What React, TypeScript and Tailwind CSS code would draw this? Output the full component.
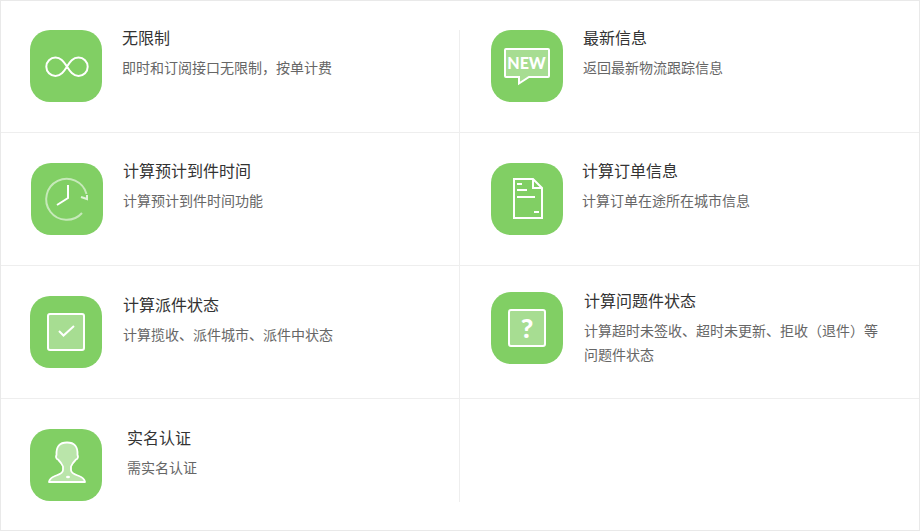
import type { ReactNode } from 'react';

const IconInfinite = () => (
  <svg width="72" height="72" viewBox="0 0 72 72" fill="none" stroke="#fff" strokeWidth="2">
    <path d="M37 36.500c-3-4.200-5.800-9-11.500-9a9.200 9.200 0 0 0 0 18.400c5.700 0 8.500-4.600 11.500-9.400s5.800-9 11.500-9a9.200 9.200 0 0 1 0 18.400c-5.700 0-8.500-4.600-11.500-9.400z" />
  </svg>
);

const IconNew = () => (
  <svg width="72" height="72" viewBox="0 0 72 72" fill="none">
    <path
      d="M15 19h42a1 1 0 0 1 1 1v26a1 1 0 0 1-1 1H38l-10 6.500V47H15a1 1 0 0 1-1-1V20a1 1 0 0 1 1-1z"
      fill="#fff"
      fillOpacity=".3"
      stroke="#fff"
      strokeWidth="2"
    />
    <text x="35.500" y="39" textAnchor="middle" fill="#fff" fontSize="16" fontWeight="900" fontFamily="Lato, sans-serif">
      NEW
    </text>
  </svg>
);

const IconClock = () => (
  <svg width="72" height="72" viewBox="0 0 72 72" fill="none" stroke="#fff" strokeWidth="2">
    <path d="M51 50A20.500 20.500 0 1 1 55.500 31" strokeOpacity=".55" />
    <path d="M50 34l6 2v-4" strokeOpacity=".75" />
    <path d="M37 22v13l-11 7" />
  </svg>
);

const IconDoc = () => (
  <svg width="72" height="72" viewBox="0 0 72 72" fill="none" stroke="#fff" strokeWidth="2">
    <path d="M23 16h19l9 9v30H23z" />
    <path d="M42 16v9h9M26 21h5M26 27h10M26 34h18M43 49h5" />
  </svg>
);

const IconCheck = () => (
  <svg width="72" height="72" viewBox="0 0 72 72" fill="none">
    <rect x="18" y="18" width="36" height="36" rx="2" fill="#fff" fillOpacity=".3" stroke="#fff" strokeWidth="2" />
    <path d="M29 35l4.500 4.500L44 30" stroke="#fff" strokeWidth="2" />
  </svg>
);

const IconQuestion = () => (
  <svg width="72" height="72" viewBox="0 0 72 72" fill="none">
    <rect x="18" y="18" width="36" height="36" rx="2" fill="#fff" fillOpacity=".3" stroke="#fff" strokeWidth="2" />
    <text x="36" y="46" textAnchor="middle" fill="#fff" fontSize="27" fontWeight="900" fontFamily="Lato, sans-serif">
      ?
    </text>
  </svg>
);

const IconPerson = () => (
  <svg width="72" height="72" viewBox="0 0 72 72" fill="none">
    <path
      d="M19 53c.5-3 2-4.500 6-6 4-1.500 8-2.500 8-6v-3.500c-1-2.500-3-5-5-7-2-.5-2.500-3-1.500-4.500-.5-8.500 3-12.500 10.500-12.500s11 4 10.500 12.500c1 1.500.5 4-1.500 4.500-2 2-4 4.500-5 7V41c0 3.500 4 4.500 8 6s5.500 3 6 6z"
      fill="#fff"
      fillOpacity=".45"
      stroke="#fff"
      strokeWidth="1.800"
      strokeLinejoin="round"
    />
    <ellipse cx="38" cy="48" rx="2" ry="1.200" fill="#fff" />
  </svg>
);

function Feature({
  icon,
  title,
  desc,
  cellClass,
  textClass,
}: {
  icon: ReactNode;
  title: string;
  desc: ReactNode;
  cellClass: string;
  textClass: string;
}) {
  return (
    <div className={`flex ${cellClass}`}>
      <div className="w-[72px] h-[72px] shrink-0 rounded-[20px] bg-[#81cf64]">{icon}</div>
      <div className={textClass}>
        <h3 className="text-base leading-6 font-normal text-[#333]">{title}</h3>
        <p className="mt-[6px] text-sm leading-6 text-[#666]">{desc}</p>
      </div>
    </div>
  );
}

export default function App() {
  return (
    <div
      className="w-[920px] h-[531px] bg-white border border-[#e9e9e9]"
      style={{ fontFamily: "'Noto Sans CJK SC', 'Noto Sans', sans-serif" }}
    >
      <div className="flex h-[132px] border-b border-[#eeeeee]">
        <div className="w-[459px] mt-[29px] border-r border-[#eeeeee]">
          <Feature
            icon={<IconInfinite />}
            title="无限制"
            desc="即时和订阅接口无限制，按单计费"
            cellClass="pl-[29px]"
            textClass="ml-[20px] -mt-[5px]"
          />
        </div>
        <Feature
          icon={<IconNew />}
          title="最新信息"
          desc="返回最新物流跟踪信息"
          cellClass="flex-1 pt-[29px] pl-[31px]"
          textClass="ml-[20px] -mt-[5px]"
        />
      </div>

      <div className="flex h-[133px] border-b border-[#eeeeee]">
        <div className="w-[459px] pt-[30px] border-r border-[#eeeeee]">
          <Feature
            icon={<IconClock />}
            title="计算预计到件时间"
            desc="计算预计到件时间功能"
            cellClass="pl-[30px]"
            textClass="ml-[20px] -mt-[5px]"
          />
        </div>
        <Feature
          icon={<IconDoc />}
          title="计算订单信息"
          desc="计算订单在途所在城市信息"
          cellClass="flex-1 pt-[30px] pl-[31px]"
          textClass="ml-[19px] -mt-[5px]"
        />
      </div>

      <div className="flex h-[133px] border-b border-[#eeeeee]">
        <div className="w-[459px] pt-[30px] border-r border-[#eeeeee]">
          <Feature
            icon={<IconCheck />}
            title="计算派件状态"
            desc="计算揽收、派件城市、派件中状态"
            cellClass="pl-[29px]"
            textClass="ml-[21px] -mt-[4px]"
          />
        </div>
        <Feature
          icon={<IconQuestion />}
          title="计算问题件状态"
          desc={
            <>
              计算超时未签收、超时未更新、拒收（退件）等
              <br />
              问题件状态
            </>
          }
          cellClass="flex-1 pt-[26px] pl-[31px]"
          textClass="ml-[21px] -mt-[4px] w-[300px]"
        />
      </div>

      <div className="flex h-[131px]">
        <div className="w-[459px] pt-[30px] mb-[28px] border-r border-[#eeeeee]">
          <Feature
            icon={<IconPerson />}
            title="实名认证"
            desc="需实名认证"
            cellClass="pl-[29px]"
            textClass="ml-[25px] -mt-[4px]"
          />
        </div>
      </div>
    </div>
  );
}
